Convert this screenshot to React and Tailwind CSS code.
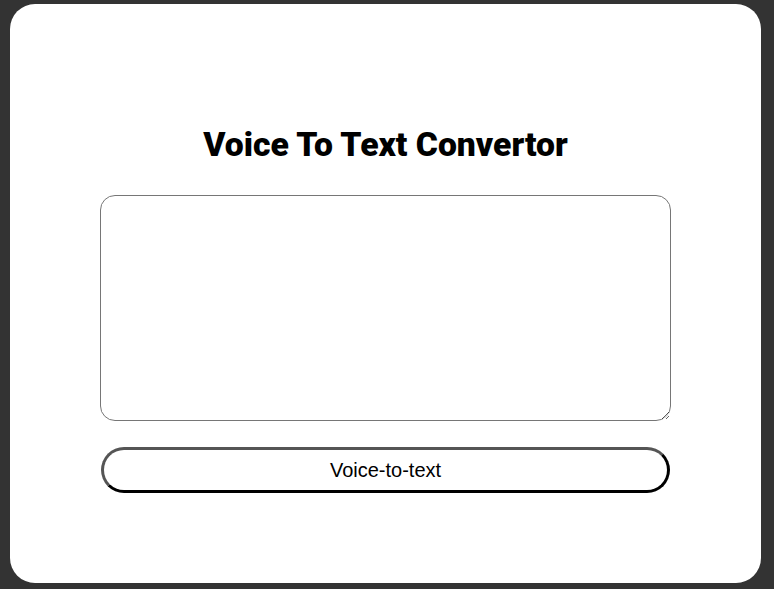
export default function App() {
  return (
    <div className="h-[589px] w-[774px] bg-[#333333] pt-[4px] pl-[10px] pr-[13px] overflow-hidden">
      <div className="h-[579px] w-[751px] bg-white rounded-[25px] flex flex-col items-center pt-[122px]">
        <h1
          className="text-[33.7px] text-black leading-[37px] whitespace-nowrap"
          style={{ fontFamily: 'Roboto, "Liberation Sans", Arial, sans-serif', fontWeight: 900 }}
        >
          Voice To Text Convertor
        </h1>
        <textarea className="mt-[32px] w-[571px] h-[226px] border border-[#767676] rounded-[15px] bg-white resize block"></textarea>
        <button
          className="mt-[26px] w-[569px] h-[46px] rounded-full bg-white text-black text-[20px] border-[3px] border-t-[#555555] border-l-[#555555] border-b-black border-r-black"
          style={{ fontFamily: '"Liberation Sans", Arial, sans-serif' }}
        >
          Voice-to-text
        </button>
      </div>
    </div>
  );
}
